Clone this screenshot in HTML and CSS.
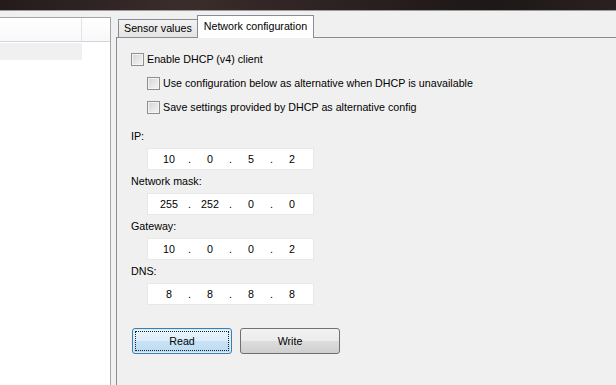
FILE: index.html
```html
<!DOCTYPE html>
<html lang="en">
<head>
    <meta charset="UTF-8">
    <title>Network configuration</title>
    <link rel="stylesheet" href="styles.css">
</head>
<body>
<div class="titlebar"></div>
<div class="main">
    <div class="list-panel">
        <div class="list-header">
            <div class="col col-first"></div>
            <div class="col"></div>
        </div>
        <div class="list-row selected"></div>
    </div>

    <div class="tab-control">
        <div class="tabs">
            <div class="tab">Sensor values</div>
            <div class="tab active">Network configuration</div>
        </div>
        <div class="tab-pane">
            <label class="check-row">
                <span class="checkbox"></span>Enable DHCP (v4) client
            </label>
            <label class="check-row sub">
                <span class="checkbox"></span>Use configuration below as alternative when DHCP is unavailable
            </label>
            <label class="check-row sub">
                <span class="checkbox"></span>Save settings provided by DHCP as alternative config
            </label>

            <div class="field-group first">
                <div class="field-label">IP:</div>
                <div class="ip-field">
                    <span class="octet">10</span><span class="dot">.</span>
                    <span class="octet">0</span><span class="dot">.</span>
                    <span class="octet">5</span><span class="dot">.</span>
                    <span class="octet">2</span>
                </div>
            </div>

            <div class="field-group">
                <div class="field-label">Network mask:</div>
                <div class="ip-field">
                    <span class="octet">255</span><span class="dot">.</span>
                    <span class="octet">252</span><span class="dot">.</span>
                    <span class="octet">0</span><span class="dot">.</span>
                    <span class="octet">0</span>
                </div>
            </div>

            <div class="field-group">
                <div class="field-label">Gateway:</div>
                <div class="ip-field">
                    <span class="octet">10</span><span class="dot">.</span>
                    <span class="octet">0</span><span class="dot">.</span>
                    <span class="octet">0</span><span class="dot">.</span>
                    <span class="octet">2</span>
                </div>
            </div>

            <div class="field-group">
                <div class="field-label">DNS:</div>
                <div class="ip-field">
                    <span class="octet">8</span><span class="dot">.</span>
                    <span class="octet">8</span><span class="dot">.</span>
                    <span class="octet">8</span><span class="dot">.</span>
                    <span class="octet">8</span>
                </div>
            </div>

            <div class="button-group">
                <button class="btn btn-default"><span class="focus">Read</span></button>
                <button class="btn">Write</button>
            </div>
        </div>
    </div>
</div>
</body>
</html>
```

FILE: styles.css
```css
body {
    margin: 0;
    width: 616px;
    height: 385px;
    overflow: hidden;
    font-family: "Liberation Sans", Arial, sans-serif;
    font-size: 10.7px;
    color: #000;
    background-color: #f0f0f0;
}

.titlebar {
    height: 10px;
    border-bottom: 1px solid #9c9c9c;
    background: linear-gradient(90deg, #241b1b 0%, #3a2d2c 30%, #2c2221 55%, #1d1717 80%, #2a2220 100%);
}

.main {
    display: flex;
    height: 374px;
}

/* left list */
.list-panel {
    width: 110px;
    margin-top: 6px;
    border-top: 1px solid #a5a5a5;
    border-right: 1px solid #a5a5a5;
    background-color: #fff;
}

.list-header {
    display: flex;
    height: 23px;
    border-bottom: 1px solid #d5d5d5;
    background: linear-gradient(#ffffff, #f7f8fa);
}

.col {
    flex: 1;
}

.col-first {
    flex: 0 0 81px;
    border-right: 1px solid #e3e4e6;
}

.list-row {
    width: 82px;
    height: 17px;
    margin-top: 1px;
}

.list-row.selected {
    background-color: #f0f0f0;
}

/* tabs */
.tab-control {
    flex: 1;
    display: flex;
    flex-direction: column;
    margin-left: 5px;
    margin-top: 4px;
}

.tabs {
    display: flex;
    align-items: flex-end;
    height: 22px;
    padding-left: 2px;
    position: relative;
    z-index: 1;
}

.tab {
    height: 17px;
    padding: 0 5px;
    line-height: 17px;
    border: 1px solid #898c95;
    border-bottom: none;
    background: linear-gradient(#f2f2f2, #e4e4e4);
}

.tab.active {
    height: 22px;
    line-height: 20px;
    padding: 0 6px;
    margin-left: -1px;
    margin-bottom: -1px;
    background: #fff;
}

.tab-pane {
    flex: 1;
    border-top: 1px solid #898c95;
    border-left: 1px solid #898c95;
    padding: 9px 0 0 14px;
}

.check-row {
    display: flex;
    align-items: center;
    height: 24px;
}

.check-row.sub {
    margin-left: 16px;
}

.checkbox {
    box-sizing: border-box;
    width: 13px;
    height: 13px;
    margin-right: 3px;
    border: 1px solid #8f8f8f;
    box-shadow: inset 0 0 0 1px #f4f4f4;
    background: linear-gradient(135deg, #d4d4d4, #f6f6f6);
}

.field-group {
    margin-top: 5px;
}

.field-group.first {
    margin-top: 11px;
}

.field-label {
    height: 13px;
    line-height: 13px;
}

.ip-field {
    box-sizing: border-box;
    display: flex;
    align-items: center;
    width: 167px;
    height: 22px;
    margin: 5px 0 0 16px;
    padding-left: 7px;
    border: 1px solid #e8e8e8;
    background-color: #fff;
}

.octet {
    width: 28px;
    text-align: center;
}

.dot {
    width: 13px;
    text-align: center;
}

.button-group {
    display: flex;
    gap: 8px;
    margin: 23px 0 0 1px;
}

.btn {
    box-sizing: border-box;
    width: 100px;
    height: 26px;
    padding: 0;
    font-family: inherit;
    font-size: 10.7px;
    color: #000;
    border: 1px solid #707070;
    border-radius: 3px;
    background: linear-gradient(#f2f2f2, #ebebeb 50%, #dddddd 50%, #cfcfcf);
}

.btn-default {
    padding: 2px;
    border-color: #3c7fb1;
    box-shadow: inset 0 0 0 1px #d8ecf8;
    background: linear-gradient(#eaf5fd, #dcedfa 50%, #c9e3f6 50%, #b9daf2);
}

.focus {
    display: flex;
    align-items: center;
    justify-content: center;
    height: 100%;
    box-sizing: border-box;
    border: 1px dotted #222;
}
```
